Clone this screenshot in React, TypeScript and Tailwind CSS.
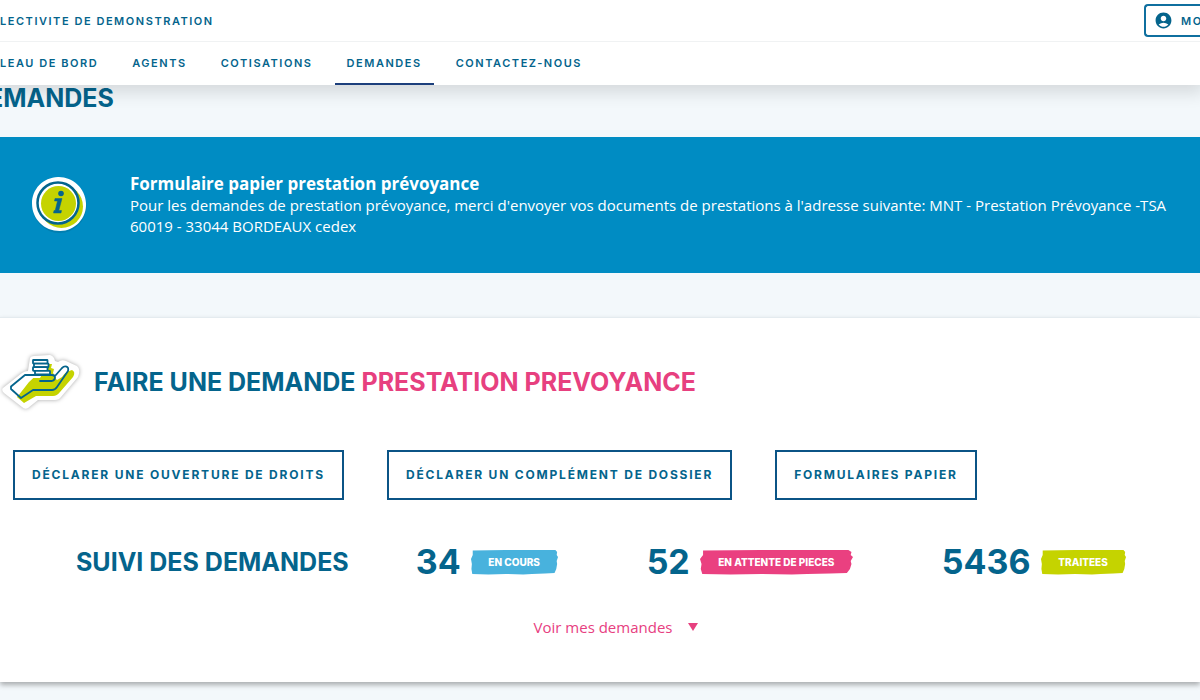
import { MdAccountCircle } from "react-icons/md";
import clsx from "clsx";

const navItems = [
  { label: "LEAU DE BORD", active: false },
  { label: "AGENTS", active: false },
  { label: "COTISATIONS", active: false },
  { label: "DEMANDES", active: true },
  { label: "CONTACTEZ-NOUS", active: false },
];

const actions = [
  "DÉCLARER UNE OUVERTURE DE DROITS",
  "DÉCLARER UN COMPLÉMENT DE DOSSIER",
  "FORMULAIRES PAPIER",
];

const stats = [
  { count: 34, label: "EN COURS", width: "w-[87px]", color: "text-[#48b2dd]" },
  { count: 52, label: "EN ATTENTE DE PIECES", width: "w-[153px]", color: "text-[#ea4080]" },
  { count: 5436, label: "TRAITEES", width: "w-[85px]", color: "text-[#c5d300]" },
];

function InfoIcon() {
  return (
    <svg aria-hidden="true" viewBox="0 0 58 58" className="h-[58px] w-[58px] shrink-0">
      <ellipse cx="29.5" cy="30" rx="27" ry="27" fill="#04648c" opacity="0.35" />
      <path
        d="M28 1C42 0.500 55.500 12 56 27C57 42 45 55 30 55C14 55 2 43 2 27.500C2 13 13 1.500 28 1Z"
        fill="#fff"
      />
      <circle cx="31.5" cy="30.5" r="21.5" fill="#c5d300" />
      <circle cx="28" cy="27" r="20.5" fill="#fff" stroke="#04648c" strokeWidth="2.5" />
      <circle cx="28.5" cy="27.5" r="17.5" fill="#c5d300" />
      <circle cx="31" cy="17.5" r="2.8" fill="#04648c" />
      <path
        d="M25 22.500H32L28.800 34.500H31.500L31 37H23.500L24 34.500H25.200L27.500 25H24.500Z"
        fill="#04648c"
        stroke="#04648c"
        strokeWidth="0.5"
      />
    </svg>
  );
}

function HandIcon() {
  return (
    <svg
      aria-hidden="true"
      viewBox="0 0 80 60"
      className="h-[60px] w-20 shrink-0 overflow-visible drop-shadow-[0_0_2px_rgba(0,0,0,0.35)]"
    >
      <path
        d="M3 36L22 21Q25 19 28 19L30 6Q31 4 34 4L50 3Q54 4 55 9L58 10Q62 7 66 9L77 14Q81 17 78 25L61 45Q59 48 55 48H38L28 56Q25 58 22 55L4 41Q1 38 3 36Z"
        fill="#fff"
      />
      <path
        d="M17 45L25 32L32 26H40L48 12H52L51 16L54 17L53 21L56 25L62 23L69 19L72 18Q76 20 73 25L60 40Q57 44 53 44H36L24 51Z"
        fill="#c5d300"
      />
      <path d="M11 36L24 23.500H36L29 30L18 44Z" fill="#fff" />
      <path d="M54 25L62 15L67 14L68 17L62 25L57 28Z" fill="#fff" />
      <g fill="none" stroke="#04648c" strokeWidth="1.8" strokeLinejoin="round" strokeLinecap="round">
        <path d="M40 29H52Q55 28 55 25.500Q55 23 52 23H25L11 34.500V37L21 46L33 38H52Q55 38 57 35L68 19Q69 15 66 14.500Q64 14 62 16L55 24" />
        <g fill="#fff">
          <rect x="33" y="8" width="14.5" height="3.6" rx="0.5" />
          <rect x="34" y="11.6" width="14.5" height="3.6" rx="0.5" />
          <rect x="33" y="15.2" width="14.5" height="3.6" rx="0.5" />
          <rect x="35" y="18.8" width="15" height="3.6" rx="0.5" />
        </g>
      </g>
    </svg>
  );
}

type StatProps = { count: number; label: string; width: string; color: string };

function Stat({ count, label, width, color }: StatProps) {
  return (
    <div className="flex items-center gap-[10px]">
      <span className="text-[34px] leading-9 font-bold">{count}</span>
      <span className={clsx("relative flex h-[26px] items-center justify-center", width, color)}>
        <svg
          aria-hidden="true"
          viewBox="0 0 100 26"
          preserveAspectRatio="none"
          className="absolute inset-0 h-full w-full"
        >
          <path
            d="M2 1.500L40 1L97 1L99 3L98.500 6L100 8L98.500 12L99 15L98 20L96 24L85 24.500L70 25L60 25.500L40 25L20 25.500L1.500 25L0.500 20L1 15L0 10L2 6Z"
            fill="currentColor"
          />
        </svg>
        <span className="relative text-[10px] leading-4 font-extrabold whitespace-nowrap text-white">{label}</span>
      </span>
    </div>
  );
}

function App() {
  return (
    <div className="min-h-screen overflow-x-hidden bg-[#f3f8fb] pb-[18px] font-['Open_Sans',sans-serif] text-[#04648c]">
      <header className="relative bg-white font-['Inter',sans-serif] text-[11px] leading-4 font-semibold tracking-[0.14em] shadow-[0_4px_16px_4px_rgba(0,0,0,0.12)]">
        <div className="flex h-[42px] items-center justify-between border-b border-[#f0f2f3]">
          <span>LECTIVITE DE DEMONSTRATION</span>
          <button
            type="button"
            className="flex h-[33px] w-14 items-center gap-2 rounded-l-[4px] border-2 border-r-0 border-[#0f6f9f] pl-2 whitespace-nowrap"
          >
            <MdAccountCircle aria-hidden="true" className="h-[19px] w-[19px] shrink-0" />
            MO
          </button>
        </div>
        <nav className="flex h-[43px] gap-[10px]">
          {navItems.map(({ label, active }) => (
            <a
              key={label}
              href="#"
              className={clsx(
                "flex items-center border-b-2 px-3 first:pl-0",
                active ? "border-[#1d3f7c]" : "border-transparent",
              )}
            >
              {label}
            </a>
          ))}
        </nav>
      </header>

      <main>
        <h1 className="-ml-3 h-[52px] font-['Inter',sans-serif] text-[25px] leading-[26px] font-bold">EMANDES</h1>

        <section className="flex items-center gap-[42px] bg-[#008cc3] py-9 pr-8 pl-[30px] text-white">
          <InfoIcon />
          <div>
            <h2 className="text-[17px] leading-[22px] font-bold">Formulaire papier prestation prévoyance</h2>
            <p className="text-[15px] leading-[21px]">
              Pour les demandes de prestation prévoyance, merci d'envoyer vos documents de prestations à l'adresse
              suivante: MNT - Prestation Prévoyance <span className="whitespace-nowrap">-TSA</span> 60019 - 33044
              BORDEAUX cedex
            </p>
          </div>
        </section>

        <section className="mt-11 border-t border-[#e4ebef] bg-white pt-[34px] pb-11 font-['Inter',sans-serif] shadow-[0_3px_5px_rgba(0,0,0,0.3)]">
          <div className="flex items-center gap-[14px]">
            <HandIcon />
            <h2 className="text-[25px] leading-8 font-bold">
              FAIRE UNE DEMANDE <span className="text-[#e7407f]">PRESTATION PREVOYANCE</span>
            </h2>
          </div>

          <div className="mt-[38px] flex gap-[43px] pl-[13px]">
            {actions.map((label) => (
              <button
                key={label}
                type="button"
                className="h-[50px] border-2 border-[#0b5486] px-[17px] text-[12px] leading-4 font-bold tracking-[0.15em] whitespace-nowrap"
              >
                {label}
              </button>
            ))}
          </div>

          <div className="mt-11 flex items-center gap-[67px] pl-[76px]">
            <h2 className="text-[25px] leading-9 font-bold whitespace-nowrap">SUIVI DES DEMANDES</h2>
            <div className="flex gap-[89px]">
              {stats.map((stat) => (
                <Stat key={stat.label} {...stat} />
              ))}
            </div>
          </div>

          <div className="mt-9 flex justify-center pl-8">
            <button
              type="button"
              className="flex items-center gap-4 font-['Open_Sans',sans-serif] text-[15px] leading-[22px] font-medium text-[#e7407f]"
            >
              Voir mes demandes
              <svg aria-hidden="true" viewBox="0 0 10 8" className="h-2 w-[10px]">
                <path d="M0 0H10L5 8Z" fill="currentColor" />
              </svg>
            </button>
          </div>
        </section>
      </main>
    </div>
  );
}

export default App;
